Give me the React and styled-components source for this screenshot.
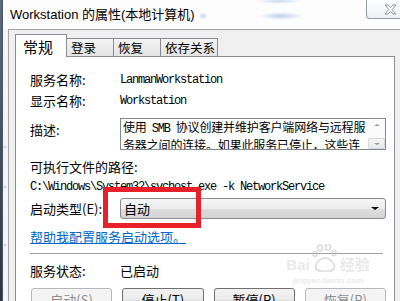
import React from 'react';
import styled, { createGlobalStyle } from 'styled-components';

const GlobalStyle = createGlobalStyle`
  html, body {
    margin: 0;
    padding: 0;
  }
  body {
    width: 400px;
    height: 301px;
    overflow: hidden;
    font-family: "Noto Sans CJK SC", sans-serif;
  }
`;

const Screen = styled.div`
  position: relative;
  width: 400px;
  height: 301px;
  overflow: hidden;
  box-sizing: border-box;
  padding-left: 2px;
  background: linear-gradient(#5a6b82, #2b3645);
`;

const Window = styled.div`
  width: 420px;
  height: 320px;
  border-left: 1px solid #4d535c;
  background: #f7f9fb;
  display: flex;
  flex-direction: column;
`;

const TitleBar = styled.div`
  height: 29px;
  flex: none;
  display: flex;
  align-items: flex-start;
  background:
    radial-gradient(ellipse 22px 4px at 278px 16px, rgba(110, 150, 215, 0.45), transparent),
    radial-gradient(ellipse 22px 3px at 276px 1px, rgba(110, 150, 215, 0.35), transparent),
    radial-gradient(ellipse 5px 4px at 200px 16px, rgba(110, 150, 215, 0.35), transparent),
    #fdfdfe;
`;

const Title = styled.div`
  padding: 7px 0 0 7px;
  font-family: "Liberation Sans", "Noto Sans CJK SC", sans-serif;
  font-size: 13px;
  line-height: 16px;
  color: #000;
  white-space: nowrap;
`;

const CloseButton = styled.div`
  margin-left: auto;
  margin-right: 9px;
  width: 48px;
  height: 19px;
  box-sizing: border-box;
  border: 1px solid #8f99a6;
  border-top: none;
  border-radius: 0 0 4px 4px;
  background: linear-gradient(#ffffff, #eef1f5);
  display: flex;
  align-items: center;
  justify-content: center;
`;

const Frame = styled.div`
  flex: 1;
  display: flex;
`;

const SideFrame = styled.div`
  width: 5px;
  flex: none;
  background:
    radial-gradient(circle 2px at 2px 118px, rgba(120, 160, 220, 0.5), transparent),
    radial-gradient(circle 2px at 2px 158px, rgba(120, 160, 220, 0.5), transparent),
    radial-gradient(circle 2px at 2px 216px, rgba(120, 160, 220, 0.5), transparent),
    #f3f5f8;
`;

const Client = styled.div`
  flex: 1;
  background: #f0f0f0;
  border-top: 1px solid #a3a3a3;
  border-left: 1px solid #a3a3a3;
  padding: 4px 0 0 6px;
`;

const TabRow = styled.div`
  display: flex;
  align-items: flex-end;
  height: 23px;
  position: relative;
  z-index: 1;
  margin-bottom: -1px;
`;

const Tab = styled.div`
  width: ${({ w }) => w}px;
  height: ${({ active }) => (active ? 23 : 18)}px;
  margin-bottom: ${({ active }) => (active ? 0 : 1)}px;
  margin-left: ${({ first }) => (first ? 0 : -1)}px;
  box-sizing: border-box;
  border: 1px solid #898c95;
  border-bottom: none;
  background: ${({ active }) => (active ? '#ffffff' : 'linear-gradient(#f3f3f3, #e4e4e4)')};
  padding-left: ${({ active }) => (active ? 7 : 4)}px;
  font-size: ${({ active }) => (active ? 15 : 12.5)}px;
  line-height: ${({ active }) => (active ? 24 : 17)}px;
  color: #000;
  white-space: nowrap;
`;

const Panel = styled.div`
  width: 380px;
  height: 260px;
  box-sizing: border-box;
  border: 1px solid #898c95;
  background: #ffffff;
  padding: 13px 8px 0 14px;
`;

const Row = styled.div`
  display: grid;
  grid-template-columns: 90px 1fr;
  align-items: ${({ top }) => (top ? 'start' : 'center')};
  height: ${({ h }) => h}px;
  margin-top: ${({ mt }) => mt || 0}px;
`;

const Label = styled.div`
  font-size: 13px;
  line-height: ${({ lh }) => lh || 20}px;
  padding-top: ${({ pt }) => pt || 0}px;
  margin-top: ${({ mt }) => mt || 0}px;
  color: #000;
  white-space: nowrap;
`;

const Mono = styled.span`
  font-family: "Liberation Mono", "Noto Sans CJK SC", monospace;
  font-size: 12px;
  letter-spacing: -1.2px;
  color: #000;
  white-space: nowrap;
`;

const InlineMono = styled(Mono)`
  margin: 0 6px 0 5px;
`;

const TextBox = styled.div`
  height: 32px;
  box-sizing: border-box;
  border: 1px solid #828790;
  background: #fff;
  display: flex;
`;

const TextLines = styled.div`
  flex: 1;
  padding: 0 0 0 2px;
  font-size: 12px;
  line-height: 15px;
  letter-spacing: -0.15px;
  white-space: nowrap;
  overflow: hidden;
  color: #000;
`;

const ScrollBar = styled.div`
  width: 17px;
  flex: none;
  display: flex;
  flex-direction: column;
  justify-content: space-between;
  background: #fbfbfb;
`;

const ScrollButton = styled.div`
  height: 11px;
  box-sizing: border-box;
  border: 1px solid ${({ framed }) => (framed ? '#d5d8dc' : 'transparent')};
  border-radius: 2px;
  background: ${({ framed }) => (framed ? 'linear-gradient(#f6f6f6, #e8e8e8)' : 'transparent')};
  display: flex;
  align-items: center;
  justify-content: center;
`;

const Arrow = styled.div`
  width: 0;
  height: 0;
  border-left: ${({ s }) => s}px solid transparent;
  border-right: ${({ s }) => s}px solid transparent;
  ${({ up, s, c }) => (up ? `border-bottom: ${s - 1}px solid ${c};` : `border-top: ${s - 1}px solid ${c};`)}
`;

const PathLine = styled.div`
  height: 14px;
  line-height: 14px;
`;

const Combo = styled.div`
  height: 21px;
  box-sizing: border-box;
  border: 1px solid #8a8a8a;
  border-radius: 3px;
  background: linear-gradient(#f6f6f6 0%, #ececec 50%, #dedede 52%, #d3d3d3 100%);
  display: flex;
  align-items: center;
  padding: 0 6px 0 3px;
  font-size: 13px;
  color: #000;
  justify-content: space-between;
`;

const HelpLink = styled.a`
  display: block;
  margin-top: 10px;
  font-size: 13px;
  line-height: 16px;
  color: #0066cc;
  text-decoration: underline;
  white-space: nowrap;
`;

const Separator = styled.div`
  margin: 8px 3px 0 0;
  height: 1px;
  background: #a0a0a0;
`;

const ButtonRow = styled.div`
  display: grid;
  grid-template-columns: repeat(4, 1fr);
  column-gap: 10px;
  margin: 9px 0 0 1px;
`;

const Button = styled.div`
  height: 23px;
  box-sizing: border-box;
  border: 1px solid ${({ disabled }) => (disabled ? '#b5b8bb' : '#707070')};
  border-radius: 3px;
  background: ${({ disabled }) =>
    disabled ? '#f4f4f4' : 'linear-gradient(#f2f2f2 0%, #ebebeb 50%, #dddddd 52%, #cfcfcf 100%)'};
  color: ${({ disabled }) => (disabled ? '#8d8d8d' : '#000')};
  font-size: 13px;
  line-height: 21px;
  text-align: center;
  white-space: nowrap;
`;

const RedBox = styled.div`
  position: absolute;
  left: 103px;
  top: 187px;
  width: 98px;
  height: 41px;
  box-sizing: border-box;
  border: 5px solid #e8202a;
`;

const Watermark = styled.div`
  position: absolute;
  left: 281px;
  top: 244px;
  width: 94px;
  display: flex;
  flex-direction: column;
  align-items: center;
  color: rgba(205, 205, 205, 0.45);
  font-family: "Liberation Sans", "Noto Sans CJK SC", sans-serif;
  font-weight: bold;
  pointer-events: none;
`;

const MarkLine = styled.div`
  display: flex;
  align-items: flex-end;
  gap: 2px;
  font-size: ${({ size }) => size}px;
  line-height: 1;
  margin-top: ${({ mt }) => mt || 0}px;
`;

const CloseGlyph = () => (
  <svg width="13" height="11" viewBox="0 0 13 11">
    <path
      d="M1 1 H4 L6.5 3.6 L9 1 H12 L8.2 5.5 L12 10 H9 L6.5 7.4 L4 10 H1 L4.8 5.5 Z"
      fill="#ffffff"
      stroke="#8d949d"
      strokeWidth="1"
      strokeLinejoin="round"
    />
  </svg>
);

const Paw = () => (
  <svg width="26" height="28" viewBox="0 0 26 28">
    <g fill="none" stroke="rgba(195,195,195,0.5)" strokeWidth="2">
      <ellipse cx="8" cy="4" rx="2.5" ry="3" />
      <ellipse cx="16" cy="3" rx="2.5" ry="3" />
      <ellipse cx="3" cy="10" rx="2" ry="2.5" />
      <ellipse cx="22" cy="9" rx="2" ry="2.5" />
      <path d="M5 26 C1 22 7 14 13 14 C19 14 25 22 21 26 C17 28 9 28 5 26 Z" />
    </g>
  </svg>
);

const tabs = [
  { label: '常规', w: 52, active: true },
  { label: '登录', w: 48 },
  { label: '恢复', w: 48 },
  { label: '依存关系', w: 58 },
];

const buttons = [
  { label: '启动(S)', disabled: true },
  { label: '停止(T)' },
  { label: '暂停(P)' },
  { label: '恢复(R)', disabled: true },
];

export default function App() {
  return (
    <>
      <GlobalStyle />
      <Screen>
        <Window>
          <TitleBar>
            <Title>Workstation 的属性(本地计算机)</Title>
            <CloseButton>
              <CloseGlyph />
            </CloseButton>
          </TitleBar>
          <Frame>
            <SideFrame />
            <Client>
              <TabRow>
                {tabs.map((t, i) => (
                  <Tab key={t.label} w={t.w} active={t.active} first={i === 0}>
                    {t.label}
                  </Tab>
                ))}
              </TabRow>
              <Panel>
                <Row h={20}>
                  <Label>服务名称:</Label>
                  <Mono>LanmanWorkstation</Mono>
                </Row>
                <Row h={20} mt={1}>
                  <Label>显示名称:</Label>
                  <Mono>Workstation</Mono>
                </Row>
                <Row h={32} mt={7} top>
                  <Label pt={2}>描述:</Label>
                  <TextBox>
                    <TextLines>
                      使用<InlineMono>SMB</InlineMono>协议创建并维护客户端网络与远程服
                      <br />
                      务器之间的连接。如果此服务已停止，这些连
                    </TextLines>
                    <ScrollBar>
                      <ScrollButton>
                        <Arrow up s={3} c="#9a9a9a" />
                      </ScrollButton>
                      <ScrollButton framed>
                        <Arrow s={3} c="#9a9a9a" />
                      </ScrollButton>
                    </ScrollBar>
                  </TextBox>
                </Row>
                <Label lh={18} mt={8}>可执行文件的路径:</Label>
                <PathLine>
                  <Mono>C:\Windows\System32\svchost.exe -k NetworkService</Mono>
                </PathLine>
                <Row h={21} mt={8}>
                  <Label>启动类型(E):</Label>
                  <Combo>
                    <span>自动</span>
                    <Arrow s={4} c="#000" />
                  </Combo>
                </Row>
                <HelpLink>帮助我配置服务启动选项。</HelpLink>
                <Separator />
                <Row h={16} mt={9}>
                  <Label lh={16}>服务状态:</Label>
                  <Label lh={16}>已启动</Label>
                </Row>
                <ButtonRow>
                  {buttons.map((b) => (
                    <Button key={b.label} disabled={b.disabled}>
                      {b.label}
                    </Button>
                  ))}
                </ButtonRow>
              </Panel>
            </Client>
          </Frame>
        </Window>
        <RedBox />
        <Watermark>
          <MarkLine size={15}>
            <span>Bai</span>
            <Paw />
            <span>经验</span>
          </MarkLine>
          <MarkLine size={8} mt={5}>jingyan.baidu.com</MarkLine>
        </Watermark>
      </Screen>
    </>
  );
}
